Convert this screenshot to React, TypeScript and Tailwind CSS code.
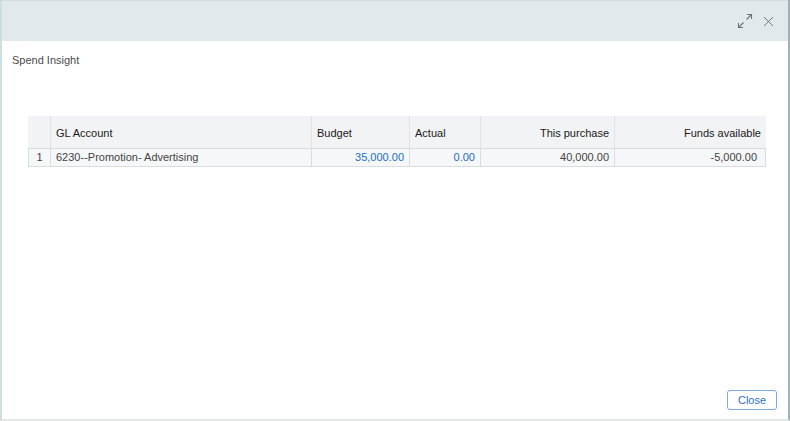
import { X } from "lucide-react";

const cols = [
  { label: "GL Account", w: "w-[261px]", align: "text-left" },
  { label: "Budget", w: "w-[98px]", align: "text-left" },
  { label: "Actual", w: "w-[71px]", align: "text-left" },
  { label: "This purchase", w: "w-[134px]", align: "text-right" },
  { label: "Funds available", w: "flex-1", align: "text-right" },
];

function ExpandIcon() {
  // diagonal double-headed arrow, pointing out to the corners
  return (
    <svg width="16" height="16" viewBox="0 0 16 16" fill="none" stroke="#6b7378" strokeWidth="1.1">
      <path d="M10 1.5h4.5V6" />
      <path d="M14.5 1.5 9.5 6.5" />
      <path d="M6 14.5H1.5V10" />
      <path d="M1.5 14.5l5-5" />
    </svg>
  );
}

export default function App() {
  return (
    <div
      className="w-[790px] h-[421px] bg-white flex flex-col border-l-2 border-r-2 border-b-2 border-l-[#cfdde0] border-r-[#9fb3b7] border-b-[#e3e6e8] overflow-hidden"
      style={{ fontFamily: '"Liberation Sans", Arial, sans-serif' }}
    >
      {/* header */}
      <div className="h-[41px] bg-[#e2e9eb] border-t border-[#d3dde0] flex items-center justify-end pr-[11px] gap-[7px] shrink-0">
        <ExpandIcon />
        <X className="w-[17px] h-[17px] text-[#5f666b]" strokeWidth={1.2} />
      </div>

      <div className="px-[10px] pt-[11px] text-[11px] text-[#4a4a4a]">Spend Insight</div>

      {/* table */}
      <div className="ml-[26px] mr-[22px] mt-[47px] text-[11px]">
        <div className="flex h-[32px] bg-[#f2f3f4] text-[#1a1a1a]">
          <div className="w-[23px] border-r border-[#e0e2e4]" />
          {cols.map((c, i) => (
            <div
              key={c.label}
              className={`${c.w} ${c.align} ${i < cols.length - 1 ? "border-r border-[#e0e2e4]" : ""} flex items-center ${c.align === "text-right" ? "justify-end" : ""} px-[5px] pt-[3px]`}
            >
              {c.label}
            </div>
          ))}
        </div>
        <div className="flex h-[19px] bg-[#f6f7f8] border border-[#d9dde0] text-[#444]">
          <div className="w-[22px] border-r border-[#d9dde0] flex items-center justify-center">1</div>
          <div className="w-[261px] border-r border-[#d9dde0] flex items-center px-[5px]">6230--Promotion- Advertising</div>
          <div className="w-[98px] border-r border-[#d9dde0] flex items-center justify-end px-[5px] text-[#1a6fc2]">35,000.00</div>
          <div className="w-[71px] border-r border-[#d9dde0] flex items-center justify-end px-[5px] text-[#1a6fc2]">0.00</div>
          <div className="w-[134px] border-r border-[#d9dde0] flex items-center justify-end px-[5px]">40,000.00</div>
          <div className="flex-1 flex items-center justify-end px-[8px]">-5,000.00</div>
        </div>
      </div>

      <div className="flex-1" />

      {/* footer */}
      <div className="flex justify-end pr-[11px] pb-[9px]">
        <button className="w-[50px] h-[20px] border border-[#7fa9dc] rounded-[3px] text-[11px] text-[#2c6fbf] bg-white">
          Close
        </button>
      </div>
    </div>
  );
}
